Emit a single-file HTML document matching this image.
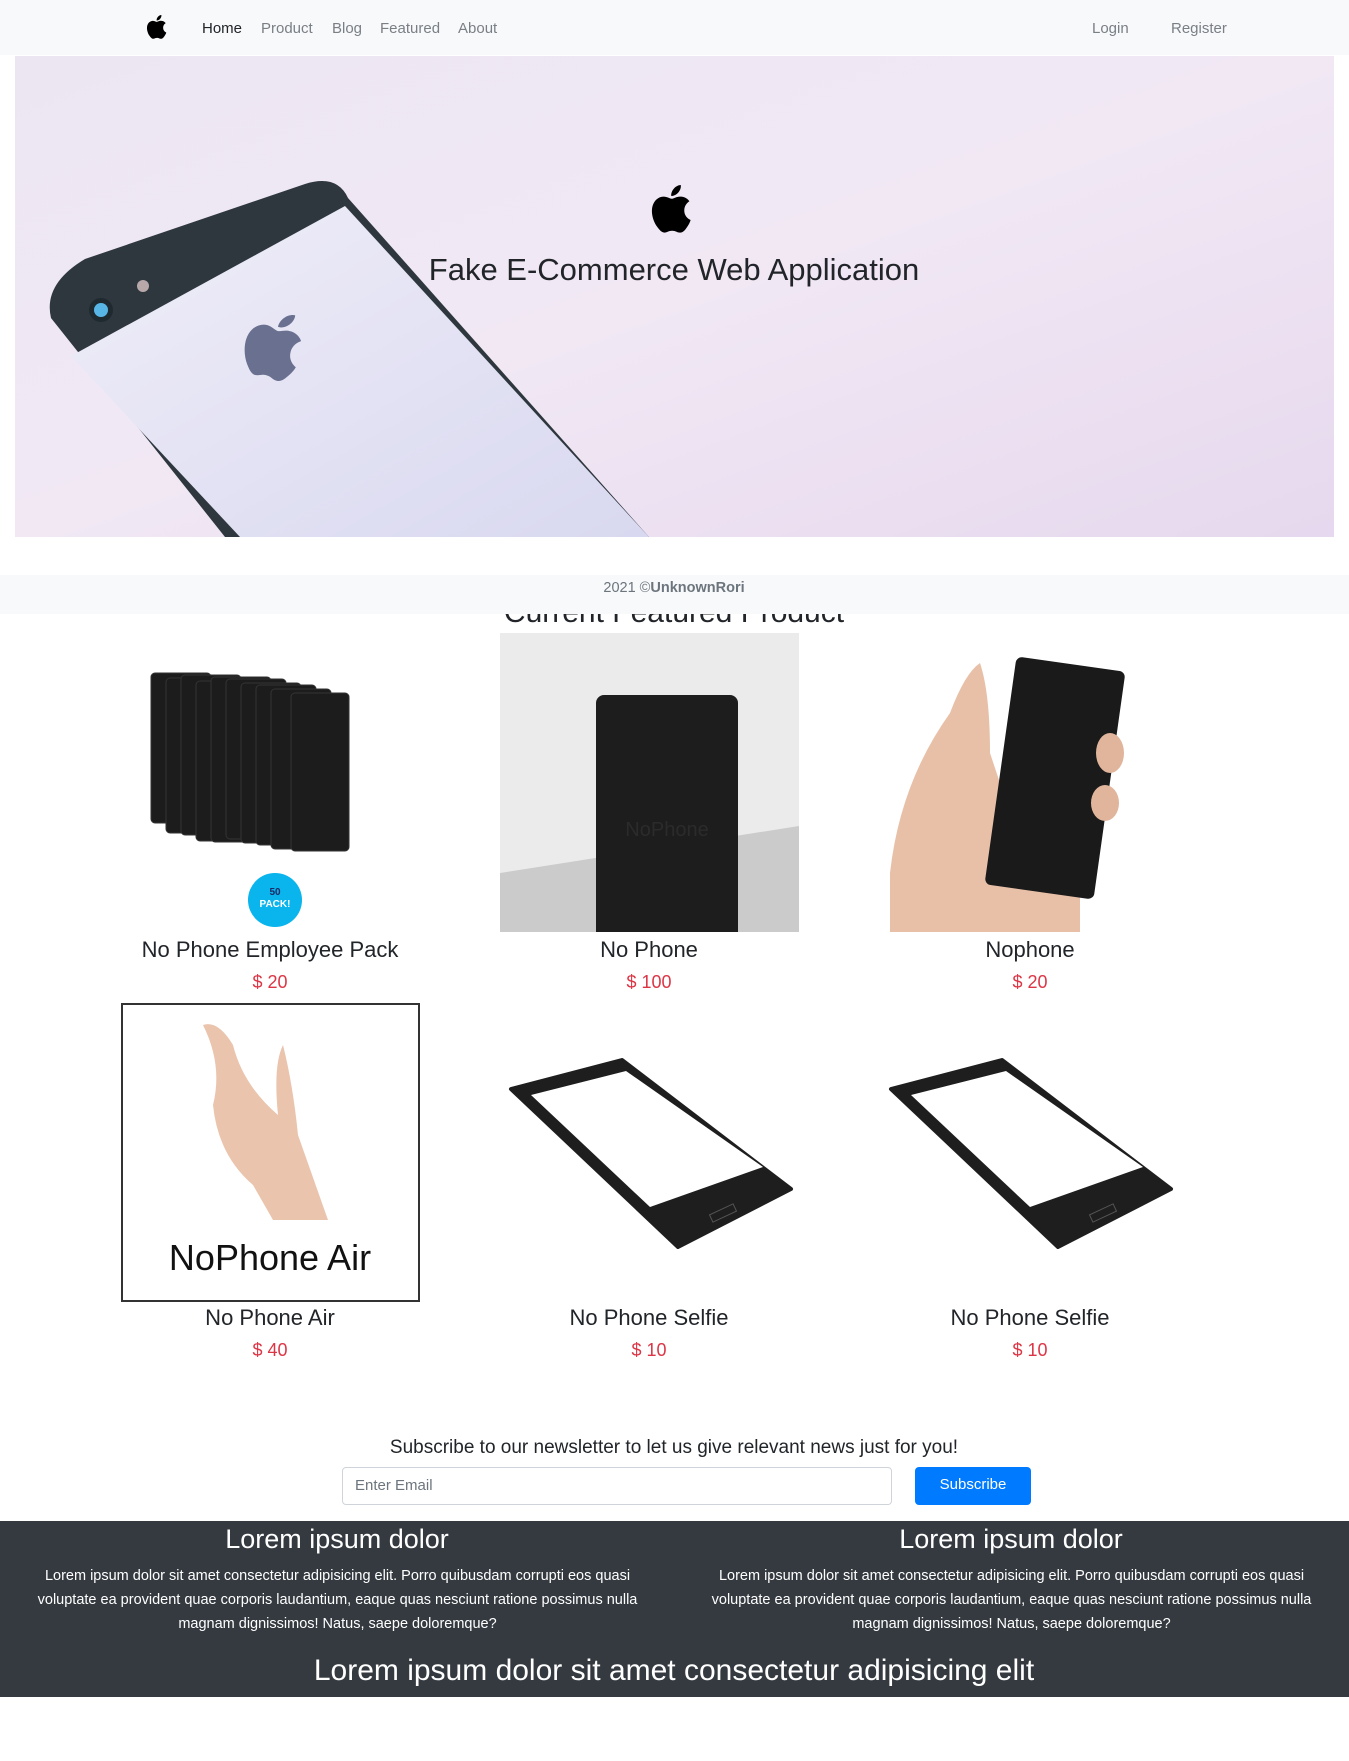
<!DOCTYPE html>
<html><head><meta charset="utf-8"><style>
*{margin:0;padding:0;box-sizing:border-box}
body{width:1349px;height:1761px;position:relative;background:#fff;font-family:"Liberation Sans",sans-serif;color:#212529;overflow:hidden}
.a{position:absolute}
.nav{left:0;top:0;width:1349px;height:55px;background:#f8f9fa}
.nl{top:20px;font-size:15px;color:#7a7f85}
.c{text-align:center;transform:translateX(-50%);white-space:nowrap}
.name{font-size:22px;color:#212529}
.price{font-size:18px;color:#dc3545}
.img{width:299px;height:299px;overflow:hidden}
.ft{color:#fff}
</style></head><body>
<div class="a nav"></div>
<svg class="a" style="left:144px;top:11px" width="28" height="32" viewBox="0 0 24 24"><path d="M16.4 12.6c0-2.6 2.1-3.8 2.2-3.9-1.2-1.8-3.1-2-3.7-2-1.6-.2-3.1.9-3.9.9-.8 0-2-.9-3.4-.9-1.7 0-3.3 1-4.2 2.6-1.8 3.1-.5 7.7 1.3 10.2.9 1.2 1.9 2.6 3.2 2.6 1.3-.1 1.8-.8 3.3-.8 1.6 0 2 .8 3.4.8 1.4 0 2.3-1.3 3.1-2.5 1-1.4 1.4-2.8 1.4-2.9 0 0-2.7-1-2.7-4.1zM13.9 4.9c.7-.9 1.2-2 1-3.2-1 0-2.3.7-3 1.6-.7.8-1.2 2-1.1 3.1 1.2.1 2.3-.6 3.1-1.5z" fill="#000"/></svg>
<div class="a nl" style="left:202px;color:#212529">Home</div>
<div class="a nl" style="left:261px">Product</div>
<div class="a nl" style="left:332px">Blog</div>
<div class="a nl" style="left:380px">Featured</div>
<div class="a nl" style="left:458px">About</div>
<div class="a nl" style="left:1092px">Login</div>
<div class="a nl" style="left:1171px">Register</div>

<svg class="a" style="left:15px;top:56px" width="1319" height="481" viewBox="0 0 1319 481">
<defs><linearGradient id="g" x1="0" y1="0" x2="1" y2="1"><stop offset="0" stop-color="#ece6f3"/><stop offset=".5" stop-color="#f1e8f4"/><stop offset="1" stop-color="#e6d8ee"/></linearGradient>
<linearGradient id="s" x1="0" y1="0" x2="1" y2="1"><stop offset="0" stop-color="#f0eef8"/><stop offset="1" stop-color="#d8d8f0"/></linearGradient></defs>
<rect width="1319" height="481" fill="url(#g)"/>
<path d="M36 262 Q28 228 70 203 L290 128 Q322 118 333 142 L634 481 L210 481 Z" fill="#2e373d"/>
<path d="M56 300 L330 150 L634 481 L225 481 Z" fill="url(#s)"/>
<circle cx="86" cy="254" r="12" fill="#1e2a30"/><circle cx="86" cy="254" r="7" fill="#58b6e6"/>
<circle cx="128" cy="230" r="6" fill="#b9a8aa"/>
<svg x="222" y="250" width="80" height="80" viewBox="0 0 24 24"><path d="M16.4 12.6c0-2.6 2.1-3.8 2.2-3.9-1.2-1.8-3.1-2-3.7-2-1.6-.2-3.1.9-3.9.9-.8 0-2-.9-3.4-.9-1.7 0-3.3 1-4.2 2.6-1.8 3.1-.5 7.7 1.3 10.2.9 1.2 1.9 2.6 3.2 2.6 1.3-.1 1.8-.8 3.3-.8 1.6 0 2 .8 3.4.8 1.4 0 2.3-1.3 3.1-2.5 1-1.4 1.4-2.8 1.4-2.9 0 0-2.7-1-2.7-4.1zM13.9 4.9c.7-.9 1.2-2 1-3.2-1 0-2.3.7-3 1.6-.7.8-1.2 2-1.1 3.1 1.2.1 2.3-.6 3.1-1.5z" fill="#6a7090" transform="rotate(15 12 12)"/></svg>
</svg>
<svg class="a" style="left:646px;top:178px" width="56" height="62" viewBox="0 0 24 24"><path d="M16.4 12.6c0-2.6 2.1-3.8 2.2-3.9-1.2-1.8-3.1-2-3.7-2-1.6-.2-3.1.9-3.9.9-.8 0-2-.9-3.4-.9-1.7 0-3.3 1-4.2 2.6-1.8 3.1-.5 7.7 1.3 10.2.9 1.2 1.9 2.6 3.2 2.6 1.3-.1 1.8-.8 3.3-.8 1.6 0 2 .8 3.4.8 1.4 0 2.3-1.3 3.1-2.5 1-1.4 1.4-2.8 1.4-2.9 0 0-2.7-1-2.7-4.1zM13.9 4.9c.7-.9 1.2-2 1-3.2-1 0-2.3.7-3 1.6-.7.8-1.2 2-1.1 3.1 1.2.1 2.3-.6 3.1-1.5z" fill="#000"/></svg>
<div class="a c" style="left:674px;top:252px;font-size:31px;color:#212529">Fake E-Commerce Web Application</div>

<div class="a c" style="left:674px;top:596px;font-size:30px">Current Featured Product</div>
<div class="a" style="left:0;top:575px;width:1349px;height:39px;background:#f8f9fa"></div>
<div class="a c" style="left:674px;top:580px;font-size:14.5px;color:#6c757d">2021 ©<b>UnknownRori</b></div>

<!-- row 1 -->
<div class="a img" style="left:121px;top:633px">
<svg width="299" height="299"><g fill="#1c1c1c" stroke="#333">
<rect x="30" y="40" width="60" height="150" rx="4"/><rect x="45" y="45" width="60" height="155" rx="4"/><rect x="60" y="42" width="60" height="160" rx="4"/><rect x="75" y="48" width="60" height="160" rx="4"/><rect x="90" y="44" width="60" height="165" rx="4"/><rect x="105" y="46" width="60" height="160" rx="4"/><rect x="120" y="50" width="60" height="160" rx="4"/><rect x="135" y="52" width="60" height="160" rx="4"/><rect x="150" y="56" width="60" height="160" rx="4"/><rect x="170" y="60" width="58" height="158" rx="4"/></g>
<circle cx="154" cy="267" r="27" fill="#0ab4ec"/><text x="154" y="262" font-size="10" font-weight="bold" text-anchor="middle" fill="#1a2a66" font-family="Liberation Sans">50</text><text x="154" y="274" font-size="10" font-weight="bold" text-anchor="middle" fill="#fff" font-family="Liberation Sans">PACK!</text></svg></div>
<div class="a img" style="left:500px;top:633px;background:#ebebeb">
<svg width="299" height="299"><path d="M0 240 L299 193 L299 299 L0 299Z" fill="#cbcbcb"/><rect x="96" y="62" width="142" height="250" rx="8" fill="#1d1d1d"/><text x="167" y="203" font-size="20" fill="#2b2b2b" text-anchor="middle" font-family="Liberation Sans">NoPhone</text></svg></div>
<div class="a img" style="left:880px;top:633px">
<svg width="299" height="299"><path d="M10 299 L10 240 Q20 150 70 80 Q85 40 100 30 Q110 60 110 120 L150 240 L200 260 L200 299Z" fill="#e8c0a8"/><rect x="120" y="30" width="110" height="230" rx="6" fill="#1a1a1a" transform="rotate(8 175 145)"/><ellipse cx="230" cy="120" rx="14" ry="20" fill="#e0b59c"/><ellipse cx="225" cy="170" rx="14" ry="18" fill="#e0b59c"/></svg></div>
<div class="a c name" style="left:270px;top:937px">No Phone Employee Pack</div>
<div class="a c name" style="left:649px;top:937px">No Phone</div>
<div class="a c name" style="left:1030px;top:937px">Nophone</div>
<div class="a c price" style="left:270px;top:972px">$ 20</div>
<div class="a c price" style="left:649px;top:972px">$ 100</div>
<div class="a c price" style="left:1030px;top:972px">$ 20</div>

<!-- row 2 -->
<div class="a img" style="left:121px;top:1003px;border:2px solid #333">
<svg width="295" height="295"><path d="M80 20 Q100 60 90 100 Q95 150 130 180 L150 215 L205 215 L175 130 Q170 80 160 40 Q150 60 155 110 Q120 80 110 40 Q95 15 80 20Z" fill="#eac4ad"/><text x="147" y="265" font-size="36" text-anchor="middle" fill="#111" font-family="Liberation Sans">NoPhone Air</text></svg></div>
<div class="a img" style="left:500px;top:1003px">
<svg width="299" height="299"><path d="M11 86 L122 57 L291 186 L178 244Z" fill="#1e1e1e" stroke="#1e1e1e" stroke-width="4" stroke-linejoin="round"/><path d="M31 92 L126 68 L263 164 L150 204Z" fill="#fff"/><rect x="210" y="206" width="26" height="8" fill="none" stroke="#555" transform="rotate(-25 223 210)"/></svg></div>
<div class="a img" style="left:880px;top:1003px">
<svg width="299" height="299"><path d="M11 86 L122 57 L291 186 L178 244Z" fill="#1e1e1e" stroke="#1e1e1e" stroke-width="4" stroke-linejoin="round"/><path d="M31 92 L126 68 L263 164 L150 204Z" fill="#fff"/><rect x="210" y="206" width="26" height="8" fill="none" stroke="#555" transform="rotate(-25 223 210)"/></svg></div>
<div class="a c name" style="left:270px;top:1305px">No Phone Air</div>
<div class="a c name" style="left:649px;top:1305px">No Phone Selfie</div>
<div class="a c name" style="left:1030px;top:1305px">No Phone Selfie</div>
<div class="a c price" style="left:270px;top:1340px">$ 40</div>
<div class="a c price" style="left:649px;top:1340px">$ 10</div>
<div class="a c price" style="left:1030px;top:1340px">$ 10</div>

<div class="a c" style="left:674px;top:1437px;font-size:19px">Subscribe to our newsletter to let us give relevant news just for you!</div>
<div class="a" style="left:342px;top:1467px;width:550px;height:38px;border:1px solid #ced4da;border-radius:4px;font-size:15px;color:#6c757d;padding:9px 12px">Enter Email</div>
<div class="a" style="left:915px;top:1467px;width:116px;height:38px;background:#007bff;border-radius:4px;font-size:15px;color:#fff;text-align:center;padding-top:9px">Subscribe</div>

<div class="a" style="left:0;top:1521px;width:1349px;height:176px;background:#343a40"></div>
<div class="a c ft" style="left:337px;top:1524px;font-size:27px">Lorem ipsum dolor</div>
<div class="a c ft" style="left:1011px;top:1524px;font-size:27px">Lorem ipsum dolor</div>
<div class="a ft" style="left:25px;top:1564px;width:625px;font-size:14.5px;line-height:24px;text-align:center">Lorem ipsum dolor sit amet consectetur adipisicing elit. Porro quibusdam corrupti eos quasi voluptate ea provident quae corporis laudantium, eaque quas nesciunt ratione possimus nulla magnam dignissimos! Natus, saepe doloremque?</div>
<div class="a ft" style="left:699px;top:1564px;width:625px;font-size:14.5px;line-height:24px;text-align:center">Lorem ipsum dolor sit amet consectetur adipisicing elit. Porro quibusdam corrupti eos quasi voluptate ea provident quae corporis laudantium, eaque quas nesciunt ratione possimus nulla magnam dignissimos! Natus, saepe doloremque?</div>
<div class="a c ft" style="left:674px;top:1654px;font-size:30px">Lorem ipsum dolor sit amet consectetur adipisicing elit</div>
</body></html>
